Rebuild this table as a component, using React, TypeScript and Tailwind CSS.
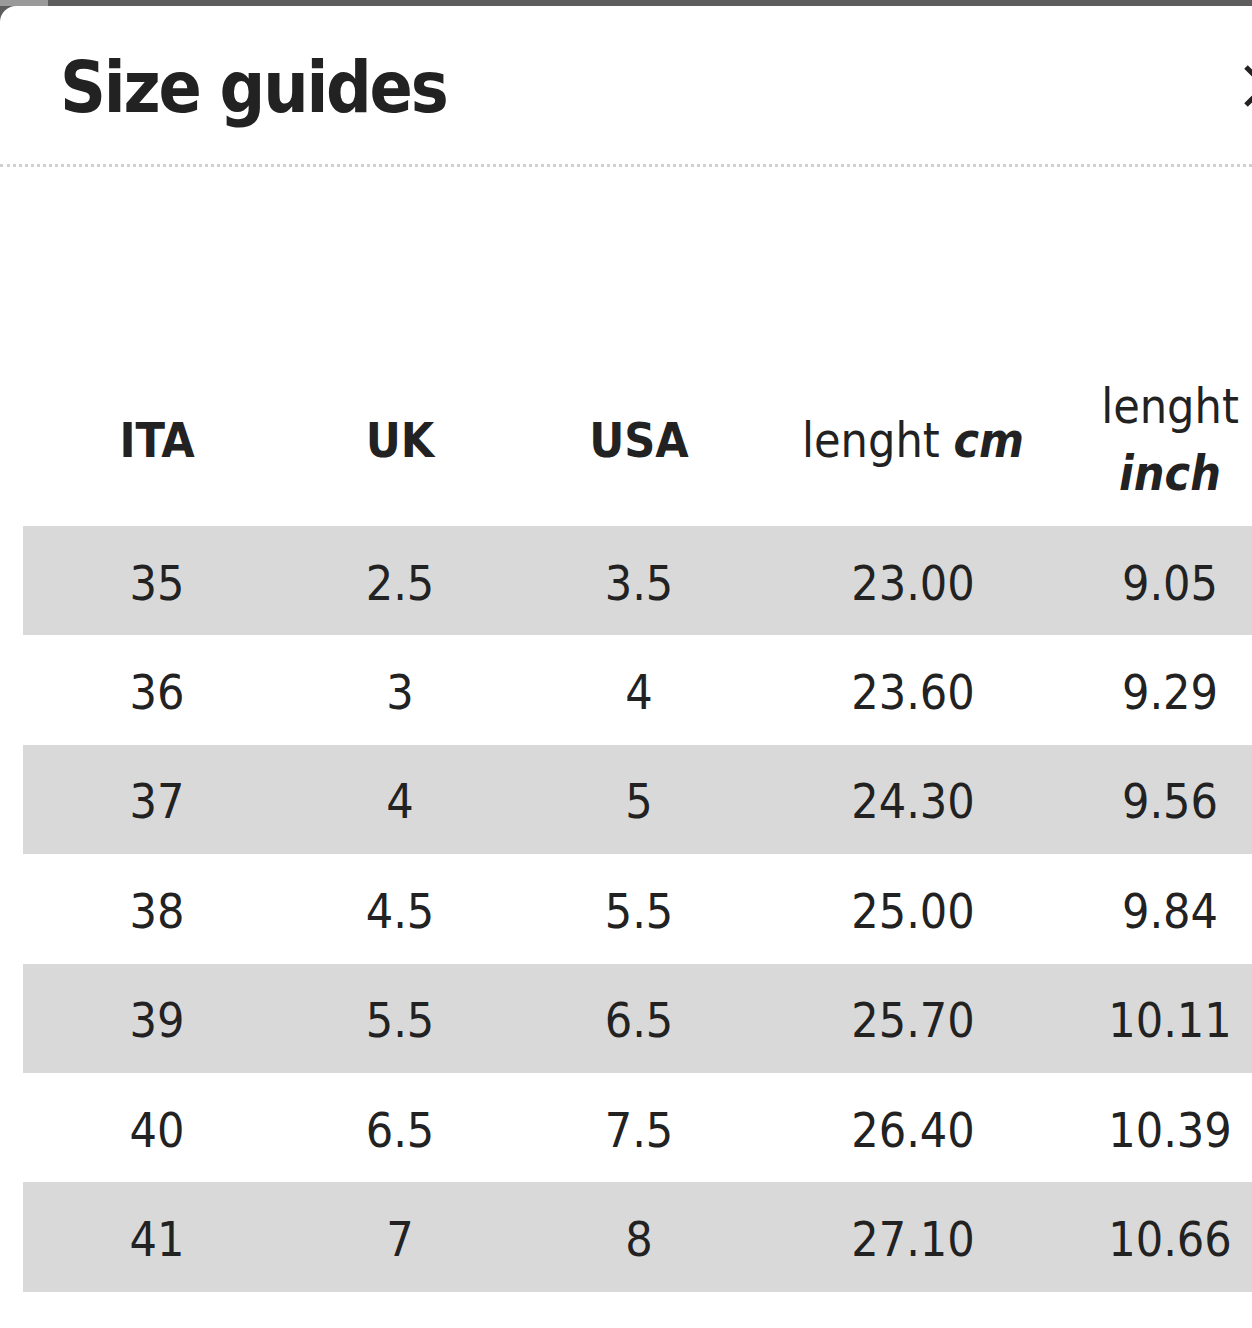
import React from "react";

const rows = [
  ["35", "2.5", "3.5", "23.00", "9.05"],
  ["36", "3", "4", "23.60", "9.29"],
  ["37", "4", "5", "24.30", "9.56"],
  ["38", "4.5", "5.5", "25.00", "9.84"],
  ["39", "5.5", "6.5", "25.70", "10.11"],
  ["40", "6.5", "7.5", "26.40", "10.39"],
  ["41", "7", "8", "27.10", "10.66"],
];

const font = { fontFamily: '"DejaVu Sans Condensed", "DejaVu Sans", sans-serif', fontStretch: "condensed" as const };

export default function App() {
  return (
    <div className="w-[1252px] h-[1328px] overflow-hidden bg-[#5d5d5d] relative" style={font}>
      <div className="absolute left-0 top-0 w-[48px] h-[6px] bg-[#9a9a9a]" />
      <div className="mt-[6px] h-[1322px] bg-white rounded-tl-[16px] relative overflow-hidden text-[#222]">
        <div className="h-[161px] flex items-center pl-[60px] pt-[4px] border-b-[3px] border-dotted border-[#d0d0d0]">
          <h1 className="text-[71px] font-bold tracking-[-2.2px] leading-none">Size guides</h1>
        </div>
        <svg className="absolute left-[1243px] top-[58px]" width="44" height="44" viewBox="0 0 44 44">
          <path d="M3 3 L41 41 M3 41 L41 3" stroke="#222" strokeWidth="5" />
        </svg>
        <div className="mt-[183px] ml-[23px] w-[1260px]">
          <div className="flex h-[176px] items-center text-center text-[48px] leading-[67px] pt-[4px]">
            <div className="w-[268px] font-bold">ITA</div>
            <div className="w-[218px] font-bold">UK</div>
            <div className="w-[260px] font-bold">USA</div>
            <div className="w-[288px]">
              lenght <span className="font-bold italic">cm</span>
            </div>
            <div className="w-[226px]">
              <div>lenght</div>
              <div className="font-bold italic">inch</div>
            </div>
          </div>
          {rows.map((r, i) => (
            <div
              key={i}
              className={`flex h-[109.4px] items-center text-center text-[48px] pt-[4px] ${i % 2 === 0 ? "bg-[#d9d9d9]" : "bg-white"}`}
            >
              <div className="w-[268px]">{r[0]}</div>
              <div className="w-[218px]">{r[1]}</div>
              <div className="w-[260px]">{r[2]}</div>
              <div className="w-[288px]">{r[3]}</div>
              <div className="w-[226px]">{r[4]}</div>
            </div>
          ))}
        </div>
      </div>
    </div>
  );
}
